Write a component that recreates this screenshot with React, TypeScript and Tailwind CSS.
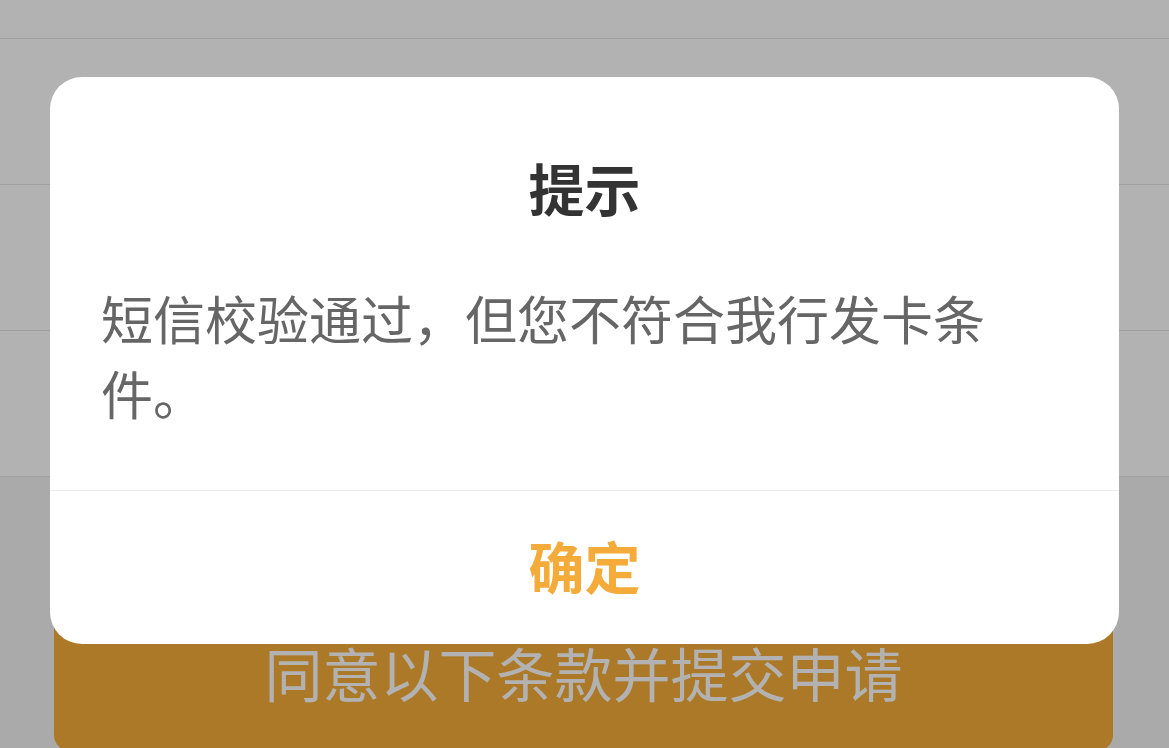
const font = { fontFamily: '"Noto Sans CJK SC", "Noto Sans", sans-serif' };

export default function App() {
  const rows = [0, 1, 2];

  return (
    <div className="relative h-[748px] w-[1169px] overflow-hidden bg-[#f4f4f4]" style={font}>
      {/* page underneath */}
      <div className="h-[39px] border-b border-[#e5e5e5] bg-white" />
      {rows.map((r) => (
        <div key={r} className="h-[146px] border-b border-[#e5e5e5] bg-white" />
      ))}
      <div className="ml-[54px] mr-[56px] mt-[124px] flex h-[150px] items-center justify-center rounded-[16px] bg-[#f6ae3a] pb-[8px]">
        <span className="text-[58px] leading-none text-white">同意以下条款并提交申请</span>
      </div>

      {/* mask + dialog */}
      <div className="absolute inset-0 flex justify-center bg-black/30 pt-[77px]">
        <div className="h-[567px] w-[1069px] overflow-hidden rounded-[32px] bg-white">
          <div className="flex flex-col px-[51px] pt-[75px]">
            <h2 className="text-center text-[56px] font-bold leading-[70px] text-[#333333]">提示</h2>
            <p className="mt-[58px] pb-[60px] text-[52px] leading-[75px] text-[#666666]">
              短信校验通过，但您不符合我行发卡条件。
            </p>
          </div>
          <div className="flex h-[153px] items-center justify-center border-t border-[#ececec] pb-[4px]">
            <button className="text-[56px] font-bold leading-none text-[#f5ab3a]">确定</button>
          </div>
        </div>
      </div>
    </div>
  );
}
